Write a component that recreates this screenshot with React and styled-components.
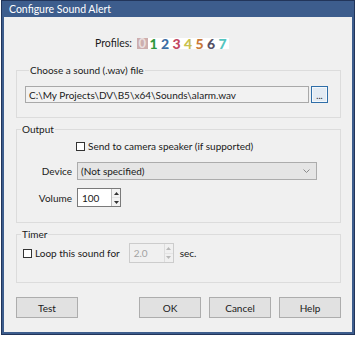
import React from 'react';
import styled, { createGlobalStyle } from 'styled-components';

const Global = createGlobalStyle`
  html, body { margin: 0; padding: 0; background: #ffffff; }
  body {
    font-family: Lato, "Noto Sans", sans-serif;
    font-size: 10px;
    color: #1a1a1a;
  }
  * { box-sizing: border-box; }
`;

const Window = styled.div`
  margin-left: 1px;
  width: 354px;
  height: 335px;
  border: 1px solid #22355a;
  background: #3d5d8d;
  padding: 0 2px 2px;
  display: flex;
  flex-direction: column;
`;

const TitleBar = styled.div`
  height: 16px;
  flex: none;
  display: flex;
  align-items: center;
  padding-left: 5px;
  color: #ffffff;
  font-size: 10.5px;
`;

const Body = styled.div`
  flex: 1;
  background: #f0f0f0;
  padding: 0 11px 0 12px;
  display: flex;
  flex-direction: column;
`;

const ProfilesRow = styled.div`
  margin-top: 19px;
  height: 14px;
  padding-left: 79px;
  display: flex;
  align-items: center;
`;

const ProfilesLabel = styled.span`
  margin-right: 5px;
  font-size: 10.5px;
`;

const ZeroBox = styled.span`
  width: 11px;
  height: 11px;
  background: #cdaeae;
  color: #eadede;
  font-weight: 700;
  font-size: 13px;
  display: flex;
  align-items: center;
  justify-content: center;
`;

const DigitStrip = styled.span`
  display: flex;
  background: #ffffff;
  height: 11px;
  align-items: center;
  padding-right: 1px;
`;

const Digit = styled.span`
  width: 11.5px;
  text-align: center;
  font-weight: 900;
  font-size: 14px;
  line-height: 11px;
  color: ${p => p.$c};
`;

const Group = styled.fieldset`
  margin: ${p => p.$mt}px 0 0;
  border: 1px solid #dcdcdc;
  padding: ${p => p.$pad};
  min-width: 0;
`;

const Legend = styled.legend`
  padding: 0 1px;
  margin-left: 4px;
  line-height: 14px;
`;

const FileRow = styled.div`
  display: flex;
  gap: 2px;
`;

const PathInput = styled.div`
  width: 284px;
  height: 17px;
  border: 1px solid #a9a9a9;
  background: #f2f2f2;
  padding-left: 3px;
  display: flex;
  align-items: center;
  white-space: nowrap;
`;

const BrowseButton = styled.div`
  width: 17px;
  height: 17px;
  border: 1px solid #2f6ea8;
  background: #e3ebf3;
  box-shadow: inset 0 0 0 1px #f4f8fb;
  display: flex;
  align-items: flex-end;
  justify-content: center;
  font-size: 9px;
  line-height: 12px;
`;

const CheckRow = styled.label`
  display: flex;
  align-items: center;
  height: 14px;
  margin-top: ${p => p.$mt || 0}px;
  padding-left: ${p => p.$pl}px;
  gap: 3px;
  white-space: nowrap;
`;

const CheckBox = styled.span`
  width: 9px;
  height: 9px;
  border: 1px solid #333333;
  background: #ffffff;
  flex: none;
`;

const FieldRow = styled.div`
  display: flex;
  align-items: center;
  margin-top: ${p => p.$mt}px;
`;

const FieldLabel = styled.span`
  width: 55px;
  text-align: right;
  margin-right: 5px;
`;

const Select = styled.div`
  width: 240px;
  height: 18px;
  border: 1px solid #acacac;
  background: #e5e5e5;
  padding: 0 6px 0 3px;
  display: flex;
  align-items: center;
  justify-content: space-between;
`;

const Spin = styled.div`
  display: flex;
  height: ${p => p.$h}px;
  border: 1px solid ${p => (p.$disabled ? '#cccccc' : '#7a7a7a')};
  background: ${p => (p.$disabled ? '#f0f0f0' : '#ffffff')};
  color: ${p => (p.$disabled ? '#a3a3a3' : '#1a1a1a')};
`;

const SpinValue = styled.span`
  width: ${p => p.$w}px;
  padding-left: 4px;
  display: flex;
  align-items: center;
`;

const SpinArrows = styled.span`
  width: 9px;
  display: flex;
  flex-direction: column;
  border-left: 1px solid ${p => (p.$disabled ? '#dddddd' : '#bcbcbc')};
`;

const SpinArrow = styled.span`
  flex: 1;
  display: flex;
  align-items: center;
  justify-content: center;
  background: ${p => (p.$disabled ? '#f0f0f0' : '#f3f3f3')};
  & + & { border-top: 1px solid ${p => (p.$disabled ? '#e4e4e4' : '#cfcfcf')}; }
`;

const TimerRow = styled.div`
  display: flex;
  align-items: center;
  padding-left: 6px;
`;

const SpinGap = styled.span`
  width: 9px;
`;

const SecLabel = styled.span`
  margin-left: 6px;
`;

const ButtonRow = styled.div`
  display: flex;
  gap: 8px;
  margin-top: 14px;
`;

const Button = styled.div`
  width: 62px;
  height: 21px;
  border: 1px solid #adadad;
  background: #e1e1e1;
  display: flex;
  align-items: center;
  justify-content: center;
  margin-left: ${p => (p.$push ? 'auto' : '0')};
`;

const Tri = ({ up, color }) => (
  <svg width="5" height="3" viewBox="0 0 5 3">
    <path d={up ? 'M0 3 L2.5 0 L5 3 Z' : 'M0 0 L2.5 3 L5 0 Z'} fill={color} />
  </svg>
);

const Chevron = () => (
  <svg width="7" height="4" viewBox="0 0 7 4">
    <path d="M0.5 0.5 L3.5 3.5 L6.5 0.5" fill="none" stroke="#8a8a8a" strokeWidth="1" />
  </svg>
);

const SpinBox = ({ value, w, h, disabled }) => (
  <Spin $h={h} $disabled={disabled}>
    <SpinValue $w={w}>{value}</SpinValue>
    <SpinArrows $disabled={disabled}>
      <SpinArrow $disabled={disabled}><Tri up color={disabled ? '#b8b8b8' : '#333'} /></SpinArrow>
      <SpinArrow $disabled={disabled}><Tri color={disabled ? '#b8b8b8' : '#333'} /></SpinArrow>
    </SpinArrows>
  </Spin>
);

const digits = [
  ['1', '#2f9a3f'],
  ['2', '#3b6ea5'],
  ['3', '#c2465f'],
  ['4', '#c9c14c'],
  ['5', '#c97a39'],
  ['6', '#575166'],
  ['7', '#55c5c0'],
];

export default function App() {
  return (
    <>
      <Global />
      <Window>
        <TitleBar>Configure Sound Alert</TitleBar>
        <Body>
          <ProfilesRow>
            <ProfilesLabel>Profiles:</ProfilesLabel>
            <ZeroBox>0</ZeroBox>
            <DigitStrip>
              {digits.map(([d, c]) => (
                <Digit key={d} $c={c}>{d}</Digit>
              ))}
            </DigitStrip>
          </ProfilesRow>

          <Group $mt={13} $pad="9px 12px 14px 8px">
            <Legend>Choose a sound (.wav) file</Legend>
            <FileRow>
              <PathInput>C:\My Projects\DV\B5\x64\Sounds\alarm.wav</PathInput>
              <BrowseButton>...</BrowseButton>
            </FileRow>
          </Group>

          <Group $mt={4} $pad="3px 0 15px 0">
            <Legend>Output</Legend>
            <CheckRow $pl={59}>
              <CheckBox />
              Send to camera speaker (if supported)
            </CheckRow>
            <FieldRow $mt={9}>
              <FieldLabel>Device</FieldLabel>
              <Select>
                <span>(Not specified)</span>
                <Chevron />
              </Select>
            </FieldRow>
            <FieldRow $mt={8}>
              <FieldLabel>Volume</FieldLabel>
              <SpinBox value="100" w={33} h={19} />
            </FieldRow>
          </Group>

          <Group $mt={4} $pad="2px 0 19px 0">
            <Legend>Timer</Legend>
            <TimerRow>
              <CheckRow $pl={0}>
                <CheckBox />
                Loop this sound for
              </CheckRow>
              <SpinGap />
              <SpinBox value="2.0" w={34} h={20} disabled />
              <SecLabel>sec.</SecLabel>
            </TimerRow>
          </Group>

          <ButtonRow>
            <Button>Test</Button>
            <Button $push>OK</Button>
            <Button>Cancel</Button>
            <Button>Help</Button>
          </ButtonRow>
        </Body>
      </Window>
    </>
  );
}
